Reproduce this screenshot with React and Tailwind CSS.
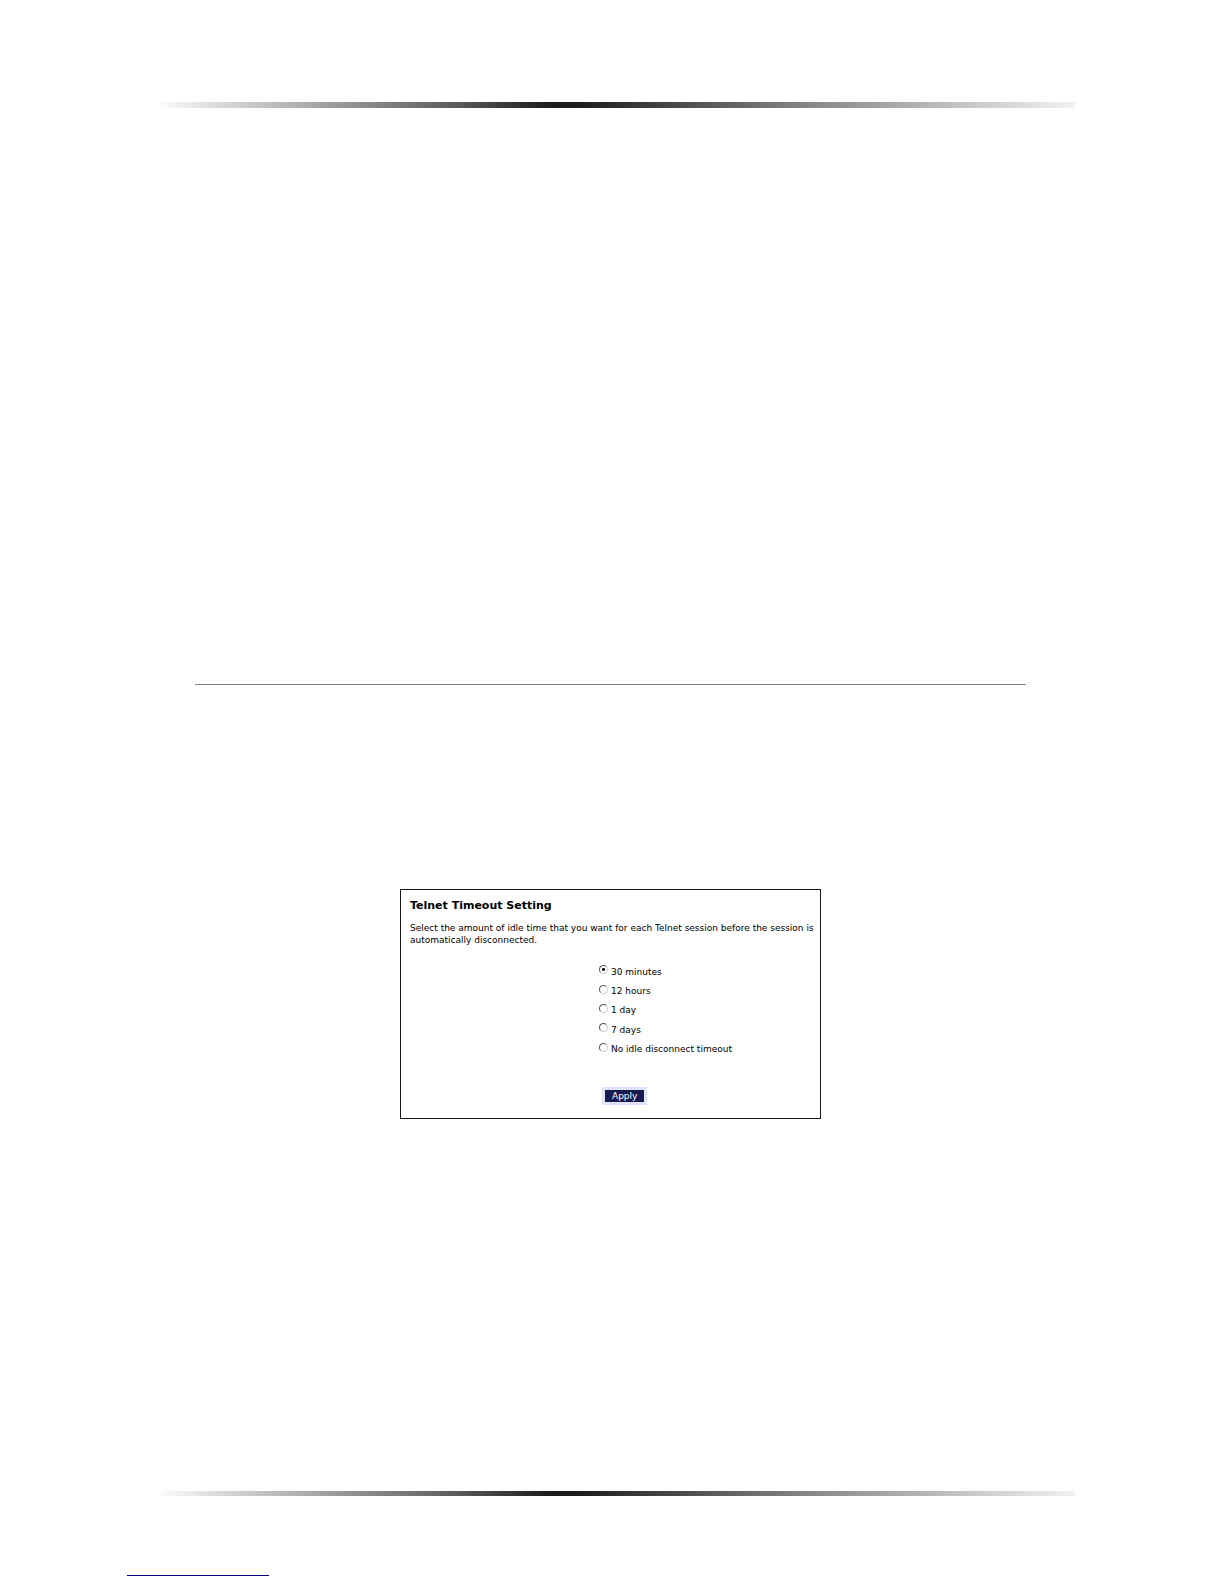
const options = ["30 minutes", "12 hours", "1 day", "7 days", "No idle disconnect timeout"];

function GradientRule({ className }) {
  return (
    <div
      className={`ml-[154px] mr-[149px] bg-[linear-gradient(to_right,#ffffff_0%,#e4e4e4_5%,#5a5a5a_33%,#1c1c1c_43%,#1c1c1c_46%,#828282_70%,#f2f2f2_100%)] ${className}`}
    />
  );
}

function TelnetTimeoutForm() {
  return (
    <form
      onSubmit={(e) => e.preventDefault()}
      className="w-full max-w-[421px] border border-[#1a1a1a] bg-white pt-2 pr-1 pb-[13px] pl-[9px] text-[9px] leading-[12px] text-black"
    >
      <h1 className="text-[11px] leading-4 font-bold">Telnet Timeout Setting</h1>
      <p className="mt-2">
        Select the amount of idle time that you want for each Telnet session before the session is automatically
        disconnected.
      </p>
      <fieldset aria-label="Telnet idle timeout" className="mt-4 ml-[189px] grid h-[97px] grid-rows-5">
        {options.map((option, i) => (
          <label key={option} className="flex items-center gap-[3px]">
            <input
              type="radio"
              name="timeout"
              defaultChecked={i === 0}
              className="mb-1 size-[9px] shrink-0 appearance-none rounded-full border border-t-[#555555] border-r-[#cccccc] border-b-[#cccccc] border-l-[#555555] bg-white checked:bg-[radial-gradient(circle,#000000_0_1px,#ffffff_2px)]"
            />
            <span>{option}</span>
          </label>
        ))}
      </fieldset>
      <button
        type="submit"
        className="mt-[28px] ml-[192px] block border-[3px] border-[#dfe3fa] bg-[#171b52] px-[7px] text-[9px] leading-[12px] text-white"
      >
        Apply
      </button>
    </form>
  );
}

export default function App() {
  return (
    <div className="flex min-h-screen flex-col bg-white pt-[102px] pb-2 font-['DejaVu_Sans',sans-serif]">
      <GradientRule className="h-[6px]" />
      <main className="mt-[576px] mr-[198px] ml-[195px] flex flex-1 flex-col items-center">
        <hr className="w-full border-t border-[#808080]" />
        <div className="mt-[204px] flex w-full justify-center">
          <TelnetTimeoutForm />
        </div>
      </main>
      <GradientRule className="h-[5px]" />
      <div className="mt-[79px] ml-[127px] w-[142px] border-t border-[#000080]" />
    </div>
  );
}
